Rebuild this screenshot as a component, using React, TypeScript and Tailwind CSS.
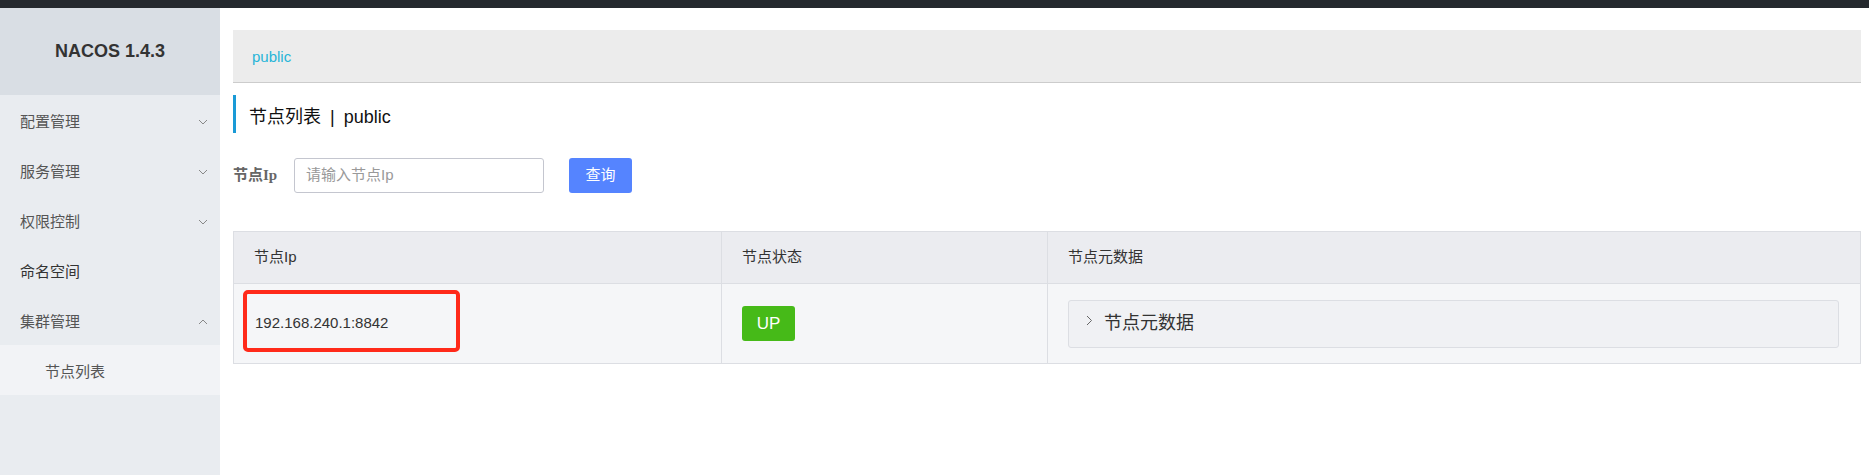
import React from "react";

const Down = () => (
  <svg width="10" height="6" viewBox="0 0 10 6" className="block">
    <polyline points="1,1 5,5 9,1" fill="none" stroke="#888" strokeWidth="1" />
  </svg>
);
const Up = () => (
  <svg width="10" height="6" viewBox="0 0 10 6" className="block">
    <polyline points="1,5 5,1 9,5" fill="none" stroke="#888" strokeWidth="1" />
  </svg>
);

const MenuItem = ({ label, icon, dark }: { label: string; icon?: React.ReactNode; dark?: boolean }) => (
  <div className={`h-[50px] flex items-center justify-between pl-[20px] pr-[12px] pt-[4px] text-[15px] ${dark ? "text-[#333]" : "text-[#555]"}`}>
    <span>{label}</span>
    {icon}
  </div>
);

export default function App() {
  return (
    <div
      className="w-[1869px] h-[475px] flex flex-col bg-white overflow-hidden"
      style={{ fontFamily: '"Liberation Sans", "Noto Sans CJK SC", sans-serif' }}
    >
      <div className="h-[8px] bg-[#25292e] shrink-0" />
      <div className="flex flex-1">
        <aside className="w-[220px] bg-[#e9ecf0] flex flex-col shrink-0">
          <div className="h-[87px] bg-[#d9dee4] flex items-center justify-center text-[18px] font-bold text-[#333]">
            NACOS 1.4.3
          </div>
          <MenuItem label="配置管理" icon={<Down />} />
          <MenuItem label="服务管理" icon={<Down />} />
          <MenuItem label="权限控制" icon={<Down />} />
          <MenuItem label="命名空间" dark />
          <MenuItem label="集群管理" icon={<Up />} />
          <div className="h-[50px] bg-[#f2f3f6] flex items-center pl-[45px] pt-[4px] text-[15px] text-[#555]">
            节点列表
          </div>
        </aside>
        <main className="flex-1 pl-[13px] pr-[8px] pt-[22px]">
          <div className="h-[53px] bg-[#ececec] border-b border-[#cccccc] flex items-center pl-[19px] pt-[2px] text-[15px] text-[#27b5d8]">
            public
          </div>
          <div className="mt-[12px] h-[38px] border-l-[3px] border-[#1a9ad6] pl-[13px] pt-[6px] flex items-center text-[18px] text-[#111]">
            <span>节点列表</span>
            <span className="mx-[9px]">|</span>
            <span>public</span>
          </div>
          <div className="mt-[25px] h-[35px] flex items-center">
            <label className="text-[15px] font-bold text-[#666] w-[61px]" style={{ fontFamily: '"Liberation Serif", "Noto Sans CJK SC", serif' }}>
              节点Ip
            </label>
            <div className="w-[250px] h-[35px] border border-[#c4c6cf] rounded-[3px] flex items-center pl-[11px] text-[15px] text-[#999] bg-white">
              请输入节点Ip
            </div>
            <button className="ml-[25px] w-[63px] h-[35px] rounded-[3px] bg-[#5584ff] text-white text-[15px] flex items-center justify-center">
              查询
            </button>
          </div>
          <div className="mt-[38px] border border-[#dcdee3] grid grid-cols-[488px_326px_1fr]">
            <div className="h-[52px] bg-[#ebecf0] border-b border-[#dcdee3] border-r flex items-center px-[20px] text-[15px] text-[#333]">节点Ip</div>
            <div className="h-[52px] bg-[#ebecf0] border-b border-[#dcdee3] border-r flex items-center px-[20px] text-[15px] text-[#333]">节点状态</div>
            <div className="h-[52px] bg-[#ebecf0] border-b border-[#dcdee3] flex items-center px-[20px] text-[15px] text-[#333]">节点元数据</div>
            <div className="relative h-[79px] bg-[#f5f6f8] border-r border-[#dcdee3] flex items-center px-[21px] text-[15px] text-[#333]">
              192.168.240.1:8842
              <div className="absolute left-[9px] top-[6px] w-[217px] h-[62px] border-[4px] border-[#ff2a1a] rounded-[5px]" />
            </div>
            <div className="h-[79px] bg-[#f5f6f8] border-r border-[#dcdee3] flex items-center px-[20px]">
              <div className="w-[53px] h-[35px] rounded-[3px] bg-[#46ba18] text-white text-[17px] flex items-center justify-center">UP</div>
            </div>
            <div className="h-[79px] bg-[#f5f6f8] flex items-center pl-[20px] pr-[21px]">
              <div className="w-full h-[48px] bg-[#f0f1f4] border border-[#dcdee3] rounded-[3px] flex items-center pl-[17px] text-[18px] text-[#333]">
                <svg width="7" height="11" viewBox="0 0 7 11" className="block mr-[11px] -mt-[6px]">
                  <polyline points="1,1 5.5,5.5 1,10" fill="none" stroke="#666" strokeWidth="1" />
                </svg>
                节点元数据
              </div>
            </div>
          </div>
        </main>
      </div>
    </div>
  );
}
